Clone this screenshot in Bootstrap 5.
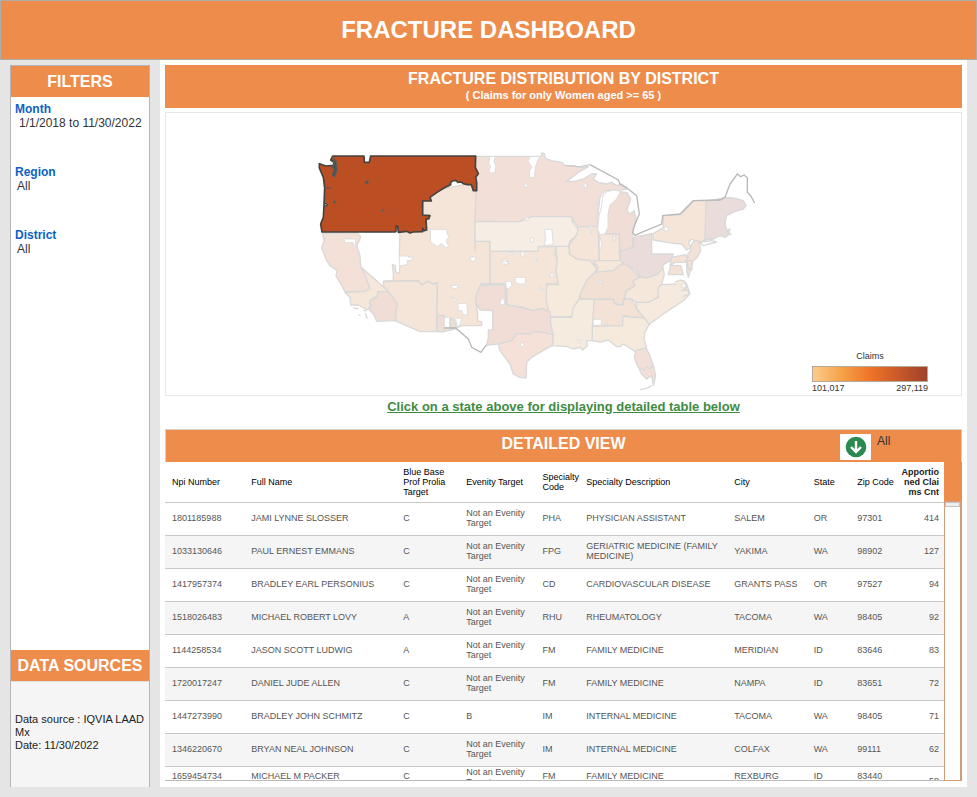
<!DOCTYPE html>
<html lang="en">
<head>
<meta charset="utf-8">
<meta name="viewport" content="width=device-width, initial-scale=1">
<title>Fracture Dashboard</title>
<link href="https://cdn.jsdelivr.net/npm/bootstrap@5.3.0/dist/css/bootstrap.min.css" rel="stylesheet">
<style>
:root { --orange: #ee8c4b; }
body { font-family: "Liberation Sans", Arial, sans-serif; font-size: 12px; line-height: 14px; color: #333; background: #e5e5e5; }
.bar { background: var(--orange); color: #fff; font-weight: 700; }
.bar h1 { font-size: 24px; line-height: 58px; }
.bar h2 { font-size: 16px; line-height: 20px; font-weight: 700; }
.page-bar { border: 1px solid #b0aca8; }
.page-body { margin-bottom: 10px; }
.side { width: 140px; margin: 5px 10px 0 10px; border: 1px solid #b4b4b4; border-bottom: 0; }
.side .bar { height: 31px; }
.filter-list { gap: 35px; padding: 5px 4px; }
.filter-list dt { color: #0b62c4; }
.filter-list dd { padding-left: 2px; }
.sources { background: #f5f5f5; height: 106px; padding: 31px 4px 0; font-size: 11px; line-height: 13px; color: #222; border-top: 1px solid #ddd; }
.panel { padding: 5px 5px 6px 5px; margin-right: 10px; }
.map-title { height: 43px; padding-top: 4px; font-size: 11px; line-height: 12px; }
.map-box { border: 1px solid #e8e8e8; margin-top: 4px; }
.legend-box { position: absolute; right: 33px; bottom: 1px; width: 116px; font-size: 9px; line-height: 12px; }
.legend-ramp { height: 16px; border: 1px solid #b5a999; background: linear-gradient(90deg, #fdcb8b, #f5a54a 24%, #ef7427 50%, #c9592a 75%, #9f4229); }
.hint { font-size: 13px; line-height: 22px; height: 33px; }
.hint a { color: #3f8b43; }
.detail-bar { height: 33px; border: 1px solid #ddcdc2; border-bottom: 0; display: grid; grid-template-columns: 1fr auto 1fr; }
.detail-tools { width: 121px; gap: 6px; padding-top: 4px; justify-self: end; color: #333; font-weight: 400; }
.download { width: 31px; height: 26px; background: #fff; border: 0; padding: 0; }
.claims { table-layout: fixed; font-size: 9px; line-height: 10px; color: #555; }
.claims th { font-weight: 400; color: #000; height: 40px; padding: 0 0 0 6px; border-bottom: 1px solid #c8c8c8; vertical-align: middle; }
.claims td { height: 33px; padding: 0 0 1px 6px; border-bottom: 1px solid #c8c8c8; vertical-align: middle; }
.claims tbody tr:nth-child(even) { background: #f5f5f5; }
.claims th:first-child, .claims td:first-child { padding-left: 7px; }
.claims th:last-child, .claims td:last-child { padding-left: 0; padding-right: 5px; text-align: right; }
.claims th:last-child { font-weight: 700; color: #222; }
.claims tbody tr:last-child td { vertical-align: top; padding-top: 4px; }
.claims tbody tr:last-child td:nth-child(4) { padding-top: 0; }
.claims tbody tr:last-child td:last-child { padding-top: 9px; }
.table-clip { border-bottom: 1px solid #bbb; }
.track { width: 18px; border-top: 39px solid var(--orange); }
.track-lane { border: 1px solid #d39b76; border-right-width: 2px; background: #fff; }
.track-thumb { height: 5px; background: #eee; border: 1px solid #c4c4c4; }
.s-coast { stroke: #b9b9b9; stroke-width: 4; fill: none; }
</style>
<script src="https://cdn.jsdelivr.net/npm/bootstrap@5.3.0/dist/js/bootstrap.bundle.min.js"></script>
</head>
<body>
<div class="d-flex flex-column vh-100">
<header class="bar page-bar text-center"><h1 class="fw-bold mb-0">FRACTURE DASHBOARD</h1></header>
<div class="page-body d-flex flex-grow-1 overflow-hidden">

<aside class="side d-flex flex-column flex-shrink-0 bg-white">
  <div class="bar d-flex align-items-center justify-content-center"><h2 class="mb-0">FILTERS</h2></div>
  <dl class="filter-list d-flex flex-column flex-grow-1 mb-0">
    <div><dt>Month</dt><dd class="mb-0 ps-1 text-nowrap">1/1/2018 to 11/30/2022</dd></div>
    <div><dt>Region</dt><dd class="mb-0">All</dd></div>
    <div><dt>District</dt><dd class="mb-0">All</dd></div>
  </dl>
  <div class="bar d-flex align-items-center justify-content-center"><h2 class="mb-0 text-nowrap">DATA SOURCES</h2></div>
  <div class="sources">Data source : IQVIA LAAD Mx<br>Date: 11/30/2022</div>
</aside>

<main class="panel bg-white d-flex flex-column flex-grow-1 overflow-hidden">
  <div class="bar map-title text-center flex-shrink-0"><h2 class="mb-0">FRACTURE DISTRIBUTION BY DISTRICT</h2>( Claims for only Women aged &gt;= 65 )</div>

  <div class="map-box position-relative flex-shrink-0">
    <svg class="d-block w-100" viewBox="498 337 2385 846" role="img" aria-label="Claims by district">
      <g stroke="#d9d9d9" stroke-width="4" stroke-linejoin="round">
        <!-- Mountain and Southwest -->
        <path fill="#f5e5d8" d="M1200 690L1268 640V600L1300 570L1428 545L1425 722H1470V752H1615V737H1667L1665 760L1672 780L1668 810L1675 850H1640V895L1645 932L1625 923L1600 930L1570 920L1520 912L1515 850H1450L1448 875L1430 885L1428 910L1433 935V962H1445V975H1385L1365 985L1330 993H1260L1185 960L1188 935L1192 910L1165 873L1152 860L1150 842L1180 840V815L1177 792L1185 794L1188 815L1198 818L1200 795L1220 792V780L1232 778L1238 770H1198Z"/>
        <!-- California -->
        <path fill="#f3e1d7" d="M968 697H1072L1082 708L1078 720L1070 735L1080 765L1082 798L1095 822L1110 865L1090 873H1035L1022 850L1015 838L1008 825L1012 810L990 795L980 780L972 760L965 742L972 722Z"/>
        <path fill="#f5e7da" d="M1082 798L1152 860L1165 873H1135L1130 888L1110 898L1112 915L1102 928L1075 913H1052L1050 890L1035 875L1090 873L1110 865L1095 822Z"/>
        <path fill="#f0ddd5" d="M1135 873H1165L1192 910L1186 935L1188 960L1130 962L1120 940L1108 928L1115 912L1108 905L1130 888Z"/>
        <!-- Northern plains and lakes -->
        <path fill="#f2dfd7" d="M1428 467H1625V457L1633 458L1635 472L1655 480L1685 485L1695 495H1720L1740 500L1765 498L1740 512L1720 527L1698 542H1725L1750 535L1775 520H1790L1780 535L1795 545L1820 550L1835 545L1850 555L1865 550L1880 565L1860 568L1815 570L1800 590L1795 630L1792 678H1735L1715 655V648H1595L1590 660L1560 663H1425L1428 570Z"/>
        <path fill="#f0ddd5" d="M1850 572L1880 575L1892 595L1880 630L1890 640L1902 630L1910 660L1898 685V740L1860 752L1858 700H1797V702L1815 700L1822 685V650L1828 610L1840 590Z"/>
        <path fill="#f6ede4" d="M1425 662L1560 663L1595 648H1715L1718 665L1735 685L1730 705L1710 720L1705 738L1615 737V751L1470 752V722H1425Z"/>
        <path fill="#f5e5d8" d="M1735 678H1792L1795 705L1798 795L1788 805L1770 780L1730 775L1708 760V730L1732 700Z"/>
        <path fill="#f5e6d9" d="M1797 700H1858V752L1860 790L1870 795L1858 808L1790 815L1780 790L1798 795Z"/>
        <!-- Central and South -->
        <path fill="#f5eadc" d="M1667 737H1707L1708 760L1730 775L1770 780L1788 802L1795 800L1780 820L1760 840L1745 870L1738 895L1728 915L1715 948H1652L1645 930L1638 895L1640 852H1675L1668 810L1672 780Z"/>
        <path fill="#f1ddd5" d="M1428 910V885L1440 855L1515 852L1518 912L1570 922L1600 930L1625 923L1650 933L1652 970L1660 1002L1630 995L1590 1000L1550 998L1535 1020L1495 1030L1460 1033L1465 1010V988H1478V930L1440 928Z"/>
        <path fill="#f5e1d7" d="M1495 1030L1535 1020L1550 998L1590 1000L1605 992L1630 995L1660 1002L1658 1035L1645 1040L1615 1058L1595 1070L1580 1085L1578 1132L1560 1130L1540 1120L1530 1090L1515 1070L1500 1050Z"/>
        <path fill="#f6ebdf" d="M1652 950H1715L1720 920L1738 895H1783L1777 1020L1760 1020L1762 1035L1748 1048L1740 1040L1720 1045L1702 1038L1658 1035L1660 1002L1652 970Z"/>
        <path fill="#f5e7da" d="M1780 780H1870L1860 808L1840 810L1788 815L1795 800Z"/>
        <path fill="#f3e0d4" d="M1785 815L1840 810L1860 792L1880 790L1908 820L1920 830L1900 840L1905 855L1880 870L1872 895L1865 913L1845 910L1840 895H1738L1745 870L1762 838Z"/>
        <path fill="#f4e2d6" d="M1783 897H1840L1845 910L1868 913L1872 895H1895L1910 925L1932 952L1905 950L1870 945L1868 975L1777 977Z"/>
        <path fill="#f6eadc" d="M1777 977L1868 975V947L1935 952L1948 970L1935 995L1932 1015L1940 1042L1905 1052L1870 1030L1860 1038H1850L1825 1018L1800 1024L1777 1020Z"/>
        <path fill="#f2dfd7" d="M1908 1050L1938 1042L1950 1065L1960 1095L1967 1125L1960 1155L1955 1125L1940 1135L1925 1120L1910 1090L1903 1070Z"/>
        <path fill="none" d="M1918 1104L1934 1108L1940 1098L1948 1104L1960 1097M1920 1167L1940 1163L1955 1155"/>
        <!-- Atlantic -->
        <path fill="#f5e8da" d="M1905 855L1900 840L1920 830H1940L1965 820L1988 798L1993 820L1985 850L1975 860V890L1945 905H1910L1895 895H1872L1880 870Z"/>
        <path fill="#f5eadd" d="M1985 852L2035 850L2050 842L2060 850L2070 880L2050 900L2020 920L1990 940L1955 965L1948 972L1932 950L1910 925L1907 905H1945L1975 890V860Z"/>
        <path fill="#e9dcda" d="M1902 710L1955 698V760H2020L2010 780L1990 792L1985 808L1970 822L1940 832L1920 828L1905 808L1875 790L1860 780V752L1898 740Z"/>
        <path fill="#f5e4d8" d="M1990 645L2045 642L2080 600H2120L2115 718L2100 725L2075 715L2065 728L2075 740L2060 748L2045 730L2020 728L1960 718L1958 700L1990 680Z"/>
        <path fill="#eadcda" d="M2118 600L2150 596L2175 590L2200 592L2230 600L2238 615L2230 625L2205 632L2180 645L2175 665L2180 690L2190 700L2175 710L2160 705L2140 715L2115 718Z"/>
        <path fill="#f4e2d6" d="M2098 722L2102 750L2092 770L2078 782L2075 808L2065 805L2060 765L2072 750V737L2082 720ZM2015 770L2055 762L2065 770L2055 785L2025 785L2010 795ZM2012 795H2042L2050 822H2005ZM2060 780H2075L2078 785L2065 830L2060 810Z"/>
        <path fill="#f6eadc" d="M2025 844L2040 838L2055 842L2060 860L2045 870L2064 868L2068 880L2048 888"/>
        <path fill="none" d="M2100 725L2135 720L2150 724L2110 735ZM2180 690L2190 685L2186 696L2194 702"/>
      </g>
      <!-- District lines inside the mountain area -->
      <path fill="none" stroke="#d9d9d9" stroke-width="5" d="M1150 842L1255 840L1265 852L1285 842L1300 850L1312 846L1310 992M1312 945H1333V960M1350 975V950L1365 985M1470 752V850M1425 722V752M1515 850H1440M1520 912V850"/>
      <path fill="#f0ddd5" stroke="#d9d9d9" stroke-width="4" d="M1312 945H1333V993H1312ZM1350 955L1358 953L1370 980L1352 984Z"/>
      <!-- Areas without claims -->
      <g fill="#fff" stroke="#dedede" stroke-width="3">
        <path d="M1198 766H1225L1226 770L1240 769L1236 778L1222 780V792L1198 796ZM1291 686H1340L1342 700L1347 710L1338 718L1346 738L1336 741L1325 728L1312 738L1292 724ZM1411 769H1430L1422 782H1413ZM1032 715H1066V735H1060V726H1035Z"/>
        <path d="M1470 468H1486L1482 482L1488 498L1484 516L1474 517L1466 510L1472 498L1466 488ZM1590 468H1620L1612 482L1606 500L1604 530L1590 532L1588 510L1596 500L1584 482ZM1572 548L1580 550L1585 560L1574 558ZM1748 550H1762L1758 564ZM1634 686H1656L1660 732L1632 734L1636 718ZM1576 650H1584V660H1576ZM1502 779L1515 775L1528 786L1516 794L1505 788ZM1530 756L1540 758L1532 766ZM1562 754H1572V768H1564ZM1590 712H1600V724H1592ZM1770 676H1776L1774 698L1770 692ZM1838 708H1848L1842 724ZM1800 710L1806 726L1802 745L1798 740ZM1608 772L1616 778L1610 782Z"/>
        <path d="M1862 572L1850 595L1830 612L1824 640V682L1814 700L1800 702L1793 686L1798 642L1804 620L1808 590L1818 574L1840 568ZM1804 578L1814 572L1800 592L1790 612Z"/>
        <path d="M1350 855L1372 853L1376 860L1362 865ZM1356 888L1372 900L1362 902ZM1374 908H1400L1404 942L1390 944L1386 930L1374 930ZM1333 950H1349V981H1333ZM1366 953L1384 952L1380 974L1372 978Z"/>
        <path d="M1546 830H1576V850H1556L1545 844ZM1518 842H1534L1536 856L1522 866L1518 856ZM1620 860L1630 864L1622 868ZM1502 895H1513V914L1500 910ZM1505 780L1525 783L1518 794ZM1650 820L1660 818V828L1652 830ZM1794 842L1806 840L1804 849ZM1779 956H1804V973L1780 975ZM1816 967L1824 970L1818 973ZM1562 1025L1572 1028V1036L1562 1038ZM1732 1018H1745L1738 1028ZM1992 680L2004 678V690L1993 692ZM2045 850H2056V860H2045Z"/>
      </g>
      <path class="s-coast" d="M1770 492L1855 538L1860 550L1878 560L1910 585L1918 640L1905 670L1898 695L1905 704L1925 695L1985 670L1988 645L2040 640L2080 600L2160 598L2175 590L2190 550L2212 520L2222 528L2233 523L2242 532V575L2252 585L2264 607M1333 982H1367L1405 1015L1415 1040L1443 1055L1455 1038L1460 1033"/>
      <path fill="none" stroke="#c8c8c8" stroke-width="3" d="M1060 922L1075 924M1090 928L1098 932M1076 943L1082 945M1096 938L1102 954M1695 495L1740 498L1770 492"/>
      <!-- Selected district -->
      <path fill="#bc4e24" stroke="#45423f" stroke-width="5" stroke-linejoin="round" d="M958 489L978 496L1000 494L1002 485L992 478L998 466H1092L1093 485H1108L1112 466H1427L1426 500L1435 519L1427 530L1430 545V570H1420L1414 552H1402L1390 549L1384 544L1374 545L1368 540H1360L1352 545V552L1332 562L1310 576L1290 590L1294 601H1268V643L1290 645L1286 655H1278L1280 688L1273 690L1268 683V693L1240 694L1230 697L1220 692L1195 695L1193 676H1188V692L1185 694H966L962 670L970 650L972 615L974 560L970 530L958 502Z"/>
      <path fill="#4f5351" stroke="#5d5f5c" stroke-width="3" d="M997 468L1008 480L1012 505L1004 530L996 524L1002 505L995 502L1003 488ZM1097 542L1105 540L1103 548L1097 549ZM1001 600L1006 602V608L1001 606ZM1152 625L1147 634L1148 627Z"/>
      <path fill="none" stroke="#555" stroke-width="3" d="M970 555L980 561L994 562M972 606L982 612L974 616"/>
      <path fill="#fff" stroke="#333" stroke-width="3" d="M974 608L983 612L975 617Z"/>
    </svg>
    <div class="legend-box">
      <div class="text-center mb-1">Claims</div>
      <div class="legend-ramp"></div>
      <div class="d-flex justify-content-between"><span>101,017</span><span>297,119</span></div>
    </div>
  </div>

  <div class="hint text-center fw-bold flex-shrink-0"><a href="#details">Click on a state above for displaying detailed table below</a></div>

  <div class="bar detail-bar flex-shrink-0" id="details">
    <span></span>
    <h2 class="mb-0 pt-1">DETAILED VIEW</h2>
    <div class="detail-tools d-flex align-items-start">
      <button type="button" class="download d-flex align-items-center justify-content-center" aria-label="Download">
        <svg width="22" height="22" viewBox="0 0 22 22"><circle cx="11" cy="11" r="10.3" fill="#2a8a4f"/><path d="M11 5V16M6 11L11 16L16 11" fill="none" stroke="#fff" stroke-width="2.4"/></svg>
      </button>
      <span>All</span>
    </div>
  </div>
  <div class="d-flex flex-grow-1 overflow-hidden">
    <div class="table-clip flex-grow-1 overflow-hidden">
      <table class="claims w-100">
        <colgroup><col style="width:10.3%"><col style="width:19.5%"><col style="width:8.1%"><col style="width:9.8%"><col style="width:5.6%"><col style="width:19%"><col style="width:10.2%"><col style="width:5.6%"><col style="width:5.6%"><col style="width:6.3%"></colgroup>
        <thead><tr><th>Npi Number</th><th>Full Name</th><th>Blue Base Prof Prolia Target</th><th>Evenity Target</th><th>Specialty Code</th><th>Specialty Description</th><th>City</th><th>State</th><th class="text-nowrap">Zip Code</th><th>Apportio<br>ned Clai<br>ms Cnt</th></tr></thead>
        <tbody>
          <tr><td>1801185988</td><td>JAMI LYNNE SLOSSER</td><td>C</td><td>Not an Evenity Target</td><td>PHA</td><td>PHYSICIAN ASSISTANT</td><td>SALEM</td><td>OR</td><td>97301</td><td>414</td></tr>
          <tr><td>1033130646</td><td>PAUL ERNEST EMMANS</td><td>C</td><td>Not an Evenity Target</td><td>FPG</td><td>GERIATRIC MEDICINE (FAMILY MEDICINE)</td><td>YAKIMA</td><td>WA</td><td>98902</td><td>127</td></tr>
          <tr><td>1417957374</td><td>BRADLEY EARL PERSONIUS</td><td>C</td><td>Not an Evenity Target</td><td>CD</td><td>CARDIOVASCULAR DISEASE</td><td>GRANTS PASS</td><td>OR</td><td>97527</td><td>94</td></tr>
          <tr><td>1518026483</td><td>MICHAEL ROBERT LOVY</td><td>A</td><td>Not an Evenity Target</td><td>RHU</td><td>RHEUMATOLOGY</td><td>TACOMA</td><td>WA</td><td>98405</td><td>92</td></tr>
          <tr><td>1144258534</td><td>JASON SCOTT LUDWIG</td><td>A</td><td>Not an Evenity Target</td><td>FM</td><td>FAMILY MEDICINE</td><td>MERIDIAN</td><td>ID</td><td>83646</td><td>83</td></tr>
          <tr><td>1720017247</td><td>DANIEL JUDE ALLEN</td><td>C</td><td>Not an Evenity Target</td><td>FM</td><td>FAMILY MEDICINE</td><td>NAMPA</td><td>ID</td><td>83651</td><td>72</td></tr>
          <tr><td>1447273990</td><td>BRADLEY JOHN SCHMITZ</td><td>C</td><td>B</td><td>IM</td><td>INTERNAL MEDICINE</td><td>TACOMA</td><td>WA</td><td>98405</td><td>71</td></tr>
          <tr><td>1346220670</td><td>BRYAN NEAL JOHNSON</td><td>C</td><td>Not an Evenity Target</td><td>IM</td><td>INTERNAL MEDICINE</td><td>COLFAX</td><td>WA</td><td>99111</td><td>62</td></tr>
          <tr><td>1659454734</td><td>MICHAEL M PACKER</td><td>C</td><td>Not an Evenity Target</td><td>FM</td><td>FAMILY MEDICINE</td><td>REXBURG</td><td>ID</td><td>83440</td><td>58</td></tr>
        </tbody>
      </table>
    </div>
    <div class="track flex-shrink-0 d-flex flex-column"><div class="track-lane flex-grow-1"><div class="track-thumb"></div></div></div>
  </div>
</main>
</div>
</div>
</body>
</html>
